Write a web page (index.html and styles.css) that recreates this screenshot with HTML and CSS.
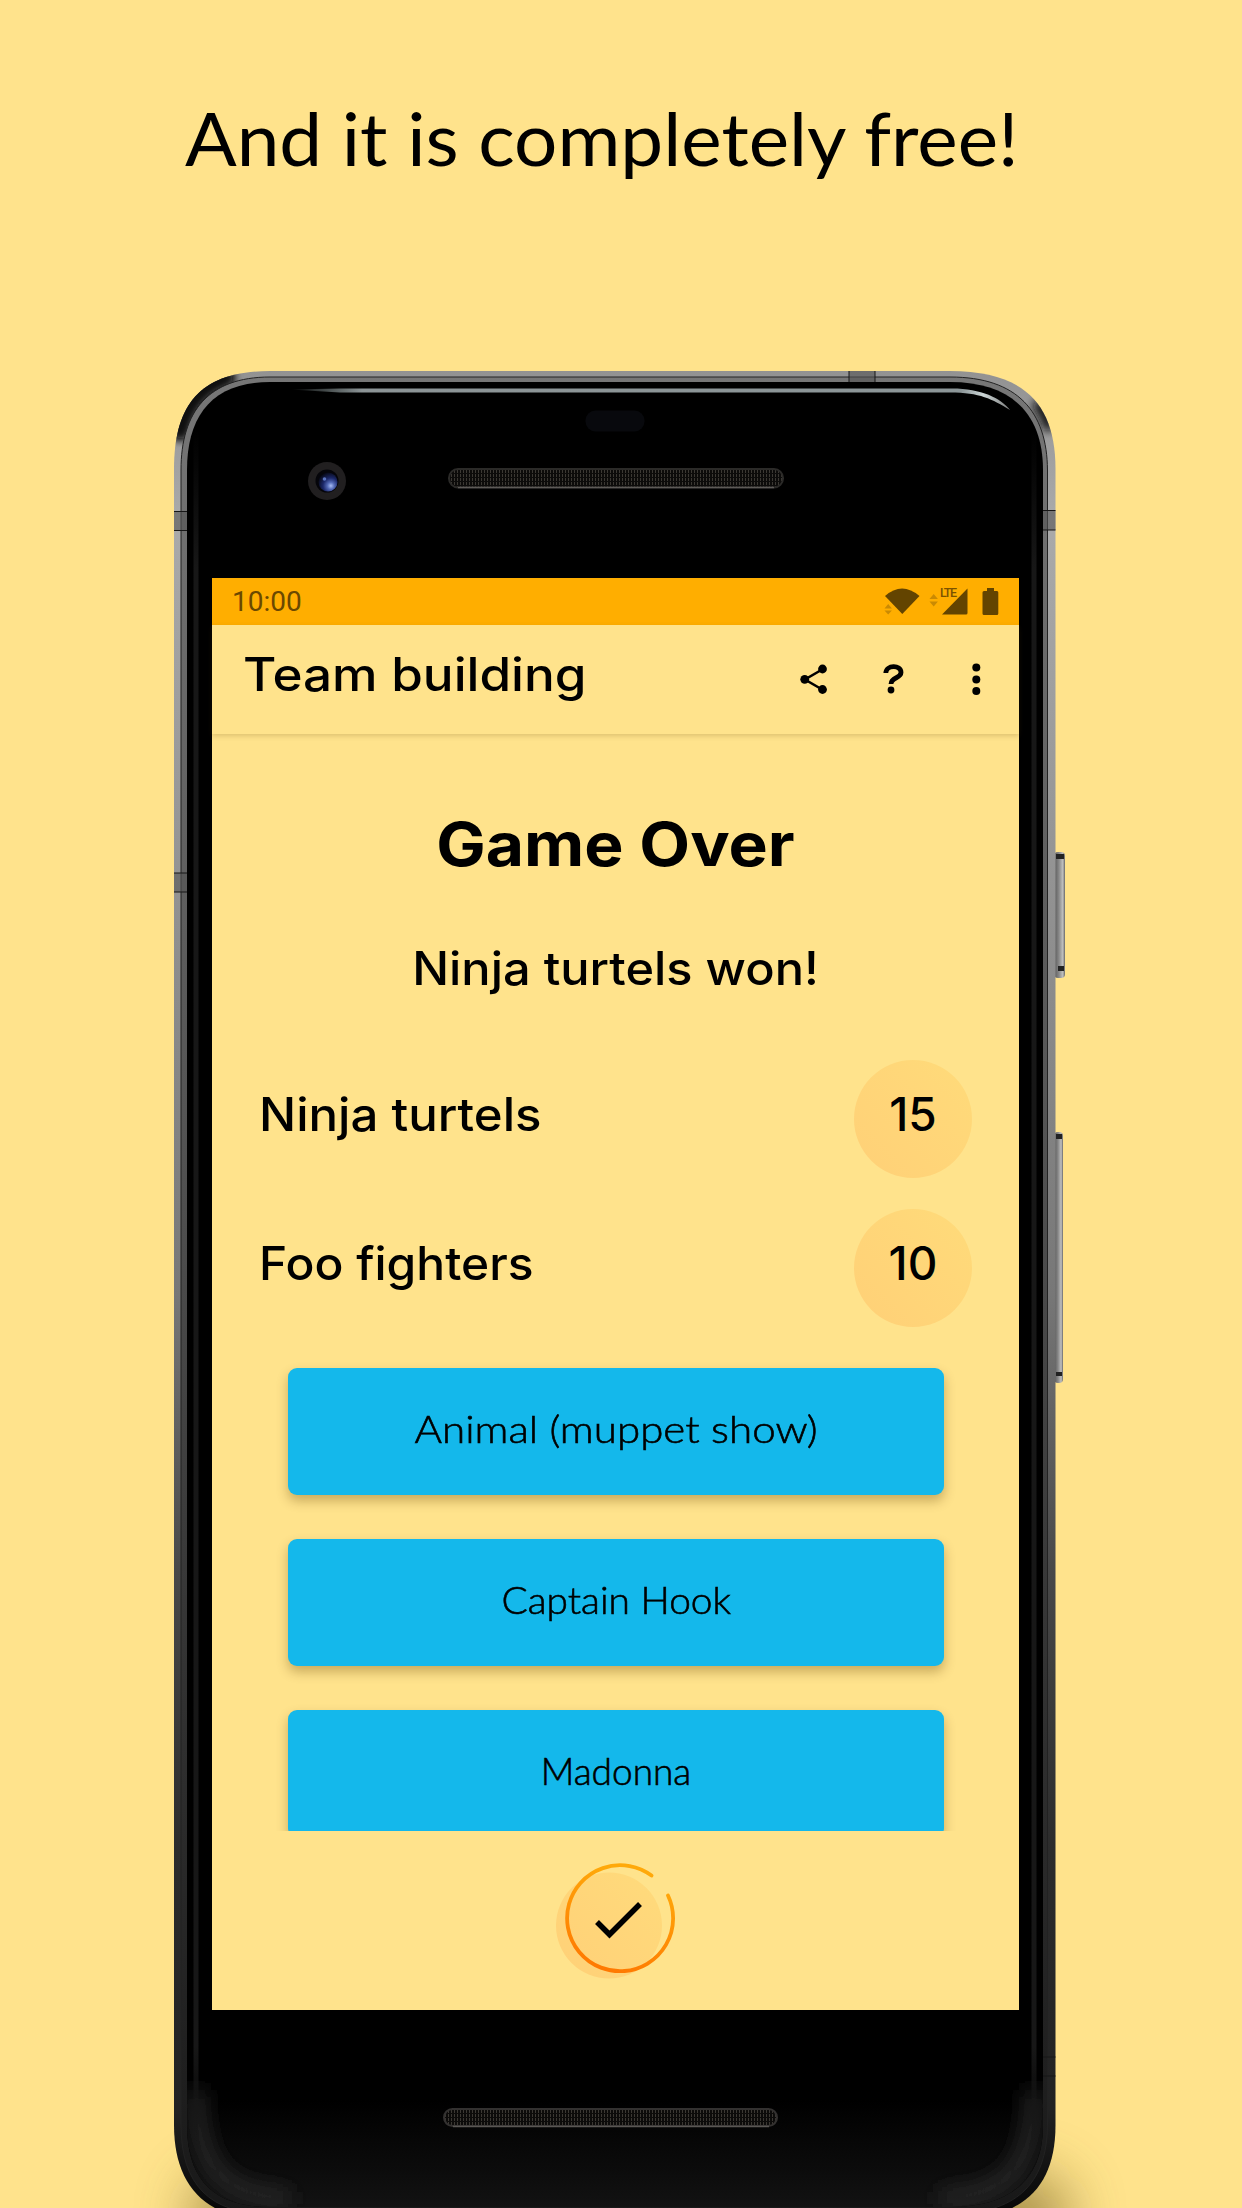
FILE: index.html
```html
<!DOCTYPE html>
<html lang="en">
<head>
<meta charset="utf-8">
<title>Team building</title>
<link rel="stylesheet" href="styles.css">
</head>
<body>
<h1 class="headline">And it is completely free!</h1>
<main class="device">
  <svg class="body" viewBox="0 0 1242 1858" width="1242" height="1858" aria-hidden="true">
    <defs>
      <linearGradient id="edge" x1="0" y1="20" x2="0" y2="1870" gradientUnits="userSpaceOnUse">
        <stop offset="0" stop-color="#929292"/><stop offset=".08" stop-color="#aaa"/><stop offset=".25" stop-color="#969696"/><stop offset=".5" stop-color="#777"/><stop offset=".65" stop-color="#484848"/><stop offset=".8" stop-color="#2c2c2c"/><stop offset=".94" stop-color="#222"/><stop offset="1" stop-color="#050505"/>
      </linearGradient>
      <linearGradient id="rim" x1="0" y1="20" x2="0" y2="1870" gradientUnits="userSpaceOnUse">
        <stop offset="0" stop-color="#777"/><stop offset=".4" stop-color="#555"/><stop offset=".7" stop-color="#333"/><stop offset="1" stop-color="#181818"/>
      </linearGradient>
      <linearGradient id="shine" x1="290" y1="0" x2="1012" y2="0" gradientUnits="userSpaceOnUse">
        <stop offset="0" stop-color="#899" stop-opacity="0"/><stop offset=".1" stop-color="#8c9496"/><stop offset=".93" stop-color="#8c9698"/><stop offset=".96" stop-color="#ccd6d6"/><stop offset="1" stop-color="#777"/>
      </linearGradient>
      <linearGradient id="key" x1="0" y1="0" x2="1" y2="0">
        <stop offset="0" stop-color="#555"/><stop offset=".45" stop-color="#888"/><stop offset=".8" stop-color="#c0c0c0"/><stop offset="1" stop-color="#666"/>
      </linearGradient>
      <linearGradient id="chin" x1="0" y1="0" x2="0" y2="1">
        <stop offset="0" stop-color="#000"/><stop offset="1" stop-color="#121212"/>
      </linearGradient>
      <linearGradient id="side" x1="0" y1="80" x2="0" y2="1800" gradientUnits="userSpaceOnUse">
        <stop offset="0" stop-color="#171717" stop-opacity="0"/><stop offset=".08" stop-color="#171717"/><stop offset=".94" stop-color="#171717"/><stop offset="1" stop-color="#171717" stop-opacity="0"/>
      </linearGradient>
      <radialGradient id="lens" cx=".65" cy=".7" r=".75">
        <stop offset="0" stop-color="#a9bdf5"/><stop offset=".25" stop-color="#5268b5"/><stop offset=".55" stop-color="#1b2768"/><stop offset="1" stop-color="#05060f"/>
      </radialGradient>
      <pattern id="mesh" width="3" height="4" patternUnits="userSpaceOnUse">
        <rect width="3" height="4" fill="#0c0b0a"/><path d="M1.500 0v3" stroke="#3b3833"/>
      </pattern>
      <filter id="soft" x="-50%" y="-80%" width="200%" height="260%"><feGaussianBlur stdDeviation="28"/></filter>
      <filter id="corner" filterUnits="userSpaceOnUse" x="100" y="1600" width="1040" height="340"><feGaussianBlur stdDeviation="10"/></filter>
      <filter id="fade" filterUnits="userSpaceOnUse" x="100" y="-20" width="1040" height="240"><feGaussianBlur stdDeviation="5"/></filter>
      <clipPath id="face"><path d="M187 120C187 66 212 32 270 32H950C1014 32 1043 66 1043 120V1775C1043 1830 1010 1857 950 1857H270C214 1857 187 1830 187 1775Z"/></clipPath>
      <clipPath id="shell"><path d="M174 119C174 55 200 21 270 21H950C1025 21 1055.500 55 1055.500 119V1775C1055.500 1838 1022 1870 950 1870H270C205 1870 174 1835 174 1775Z"/></clipPath>
    </defs>
    <rect x="190" y="1825" width="880" height="80" rx="40" fill="#6b571e" opacity=".6" filter="url(#soft)"/>
    <rect x="1054" y="502" width="11" height="126" rx="4" fill="url(#key)"/>
    <path d="M1056 504h8v5h-8zM1058 616h6v5h-6z" fill="#222"/>
    <rect x="1054" y="782" width="9" height="251" rx="4" fill="url(#key)"/>
    <path d="M1056 784h6v5h-6zM1056 1022h6v4h-6z" fill="#222"/>
    <g clip-path="url(#shell)">
      <rect x="174" y="21" width="882" height="1850" fill="url(#edge)"/>
      <path d="M178 88C184 56 200 34 232 25" fill="none" stroke="#080808" stroke-width="16" filter="url(#fade)"/>
      <path d="M178 88C184 56 200 34 232 25" fill="none" stroke="#080808" stroke-width="14" filter="url(#fade)"/>
      <path d="M1036 52C1043 60 1047 68 1050 80" fill="none" stroke="#111" stroke-width="12" filter="url(#fade)"/>
    </g>
    <path d="M181 120C181 62 208 27 270 27H950C1018 27 1047 62 1047.500 120V1775C1047 1835 1015 1864 950 1864H270C210 1864 181 1835 181 1775Z" fill="url(#rim)" stroke="#222" stroke-width="1"/>
    <path d="M187 120C187 66 212 32 270 32H950C1014 32 1043 66 1043 120V1775C1043 1830 1010 1857 950 1857H270C214 1857 187 1830 187 1775Z" fill="#000"/>
    <g clip-path="url(#face)">
      <rect x="187" y="1750" width="856" height="107" fill="url(#chin)"/>
      <path d="M196 1740C196 1815 220 1848 290 1848M1034 1740C1034 1815 1010 1848 940 1848" fill="none" stroke="#2b2b2b" stroke-width="16" filter="url(#corner)"/>
      <path d="M193.500 80h5V1800h-5zM1031.500 80h5V1800h-5z" fill="url(#side)"/>
    </g>
    <path d="M290 39.500 340 38.500H950C980 38 1001 48 1010 60C992 49 980 42.500 950 42.500H340Z" fill="url(#shine)"/>
    <path d="M849 21h26v11h-26zM174 161.500h13v19h-13zM1043 160.500h12.500v19.500h-12.500zM174 523h13v19h-13z" fill="#555" opacity=".6"/>
    <path d="M849 21v11M875 21v11M174 161.500h13M174 180.500h13M1043 160.500h12.500M1043 180h12.500M174 523h13M174 542h13M1043 1707h12.500M1043 1726h12.500" stroke="#161616"/>
    <rect x="585.500" y="60.500" width="59" height="21" rx="10" fill="#08090d"/>
    <circle cx="327" cy="131" r="19" fill="#211f20"/><circle cx="327" cy="131" r="11.500" fill="#05050a"/><circle cx="328" cy="132" r="9.500" fill="url(#lens)"/><circle cx="324.500" cy="129" r="1.800" fill="#5b74bf"/>
    <rect x="449" y="119" width="334" height="18.500" rx="9" fill="url(#mesh)" stroke="#2b2a28" stroke-width="2"/>
    <path d="M458 137.500H774" stroke="#5d5a57" stroke-width="1.500"/>
    <rect x="444" y="1759" width="333" height="17" rx="8.500" fill="url(#mesh)" stroke="#333130" stroke-width="2"/>
    <path d="M453 1776.500H769" stroke="#5a5754" stroke-width="1.500"/>
  </svg>
  <div class="screen">
    <div class="status">
      <span>10:00</span>
      <svg width="116" height="30" viewBox="0 0 116 30" aria-hidden="true">
        <path d="M1 9Q18-6 35.500 9L18.300 27Z" fill="#634400"/>
        <path d="M.5 21.500l3.700-4.500 3.700 4.500zM.5 23.500h7.400L4.200 27.500zM45.500 12l4.200-5 4.200 5zM45.500 14.500h8.400l-4.200 5z" fill="#ca8a03"/>
        <path d="M58 27.500 83.500 1.500V26q0 1.500-1.500 1.500Z" fill="#634400"/>
        <path d="M100 4h3V1h7v3h3q1.300 0 1.300 1.500V26.500q0 1.500-1.500 1.500H100q-1.500 0-1.500-1.500V5.500Q98.500 4 100 4Z" fill="#634400"/>
        <text x="56" y="10" class="lte" textLength="17">LTE</text>
      </svg>
    </div>
    <header class="appbar">
      <h2>Team building</h2>
      <svg width="182" height="32" viewBox="0 0 182 32" aria-hidden="true">
        <path d="M23 6 5 16.500 23 27" fill="none" stroke="#000" stroke-width="2.600"/>
        <circle cx="22.500" cy="6" r="4.400"/><circle cx="4.700" cy="16.300" r="4.400"/><circle cx="22.500" cy="26.500" r="4.400"/>
        <path d="M85.800 10C86 1.800 101 1.200 101 9.500C101 15.500 91 14 91 21" fill="none" stroke="#000" stroke-width="4.800"/>
        <circle cx="91" cy="27" r="3.400"/>
        <circle cx="176.300" cy="4.600" r="4"/><circle cx="176.300" cy="16.400" r="4"/><circle cx="176.300" cy="28" r="4"/>
      </svg>
    </header>
    <section class="result">
      <h3>Game Over</h3>
      <p class="winner">Ninja turtels won!</p>
      <div class="team"><span class="name">Ninja turtels</span><b class="score">15</b></div>
      <div class="team"><span class="name short">Foo fighters</span><b class="score">10</b></div>
      <div class="cards">
        <div class="card"><span class="wide">Animal (muppet show)</span></div>
        <div class="card"><span class="medium">Captain Hook</span></div>
        <div class="card"><span>Madonna</span></div>
      </div>
    </section>
    <footer class="done">
      <svg width="122" height="118" viewBox="0 0 122 118" aria-hidden="true">
        <defs>
          <linearGradient id="disc" x1="0" y1="1" x2="1" y2="0"><stop offset="0" stop-color="#ffd077"/><stop offset="1" stop-color="#ffdb7c"/></linearGradient>
          <linearGradient id="ring" x1="0" y1="1" x2=".3" y2="0"><stop offset="0" stop-color="#ff7300"/><stop offset="1" stop-color="#ffa90a"/></linearGradient>
        </defs>
        <circle cx="53" cy="62.500" r="53" fill="url(#disc)"/>
        <path d="M95.500 12.500A53 53 0 1 0 112 32.500" fill="none" stroke="url(#ring)" stroke-width="3.800" stroke-linecap="round"/>
        <path d="M41 59 53.500 71.500 84 41" fill="none" stroke="#000" stroke-width="5.500"/>
      </svg>
    </footer>
  </div>
</main>
</body>
</html>
```
FILE: styles.css
```css
* { box-sizing: border-box; }
body {
  margin: 0;
  width: 1242px;
  height: 2208px;
  overflow: hidden;
  background: #ffe38c;
  color: #000;
  font-family: Inter, "Liberation Sans", sans-serif;
}
h1, h2, h3, p { margin: 0; font-weight: 500; }
.headline {
  height: 350px;
  margin-left: 184.500px;
  padding-top: 94px;
  font: 400 73px/88px Lato, sans-serif;
  white-space: nowrap;
  transform: scaleX(1.048);
  transform-origin: left;
}
.device { position: relative; height: 1858px; padding: 228px 223px 0 212px; }
.body { position: absolute; left: 0; top: 0; }
.screen {
  position: relative;
  display: flex;
  flex-direction: column;
  height: 1431.500px;
  background: #ffe38c;
}
.status {
  display: flex;
  justify-content: space-between;
  align-items: center;
  height: 47px;
  padding: 0 19px 0 20px;
  background: #ffae00;
  color: #6b4900;
  font: 400 28px/47px Roboto, sans-serif;
}
.lte { font: 500 12.500px Roboto, sans-serif; fill: #7a5200; }
.appbar {
  display: flex;
  justify-content: space-between;
  align-items: center;
  height: 109px;
  padding: 0 37px 2px 31px;
  box-shadow: 0 2px 5px rgba(90, 60, 0, .2);
}
.appbar h2 {
  padding-bottom: 9px;
  font-size: 46px;
  transform: scaleX(1.113);
  transform-origin: left;
}
.result { height: 1097px; overflow: hidden; }
h3 {
  padding-top: 75px;
  font-size: 60px;
  font-weight: 700;
  line-height: 70px;
  text-align: center;
  transform: scaleX(1.1);
}
.winner {
  padding-top: 61px;
  font-size: 46px;
  line-height: 56px;
  text-align: center;
  transform: scaleX(1.06);
}
.team {
  display: flex;
  justify-content: space-between;
  align-items: center;
  height: 118px;
  margin: 63.500px 47px 0;
  font-size: 46px;
  font-weight: 500;
}
.team + .team { margin-top: 31px; }
.name {
  padding-bottom: 9px;
  transform: scaleX(1.068);
  transform-origin: left;
}
.name.short { transform: scaleX(1.042); }
.score {
  width: 118px;
  height: 118px;
  border-radius: 50%;
  background: linear-gradient(45deg, #ffd077, #ffdb7a);
  font-weight: 500;
  line-height: 109px;
  text-align: center;
}
.cards { display: flex; flex-direction: column; gap: 44px; padding: 41.500px 75px 0 76px; }
.card {
  flex: none;
  height: 127px;
  border-radius: 9px;
  background: #14b8eb;
  box-shadow: 0 6px 12px rgba(90, 60, 0, .33);
  font: 300 37px/121px Lato, sans-serif;
  text-align: center;
  -webkit-text-stroke: .6px #000;
}
.card span { display: inline-block; }
.card .wide { transform: scaleX(1.138); }
.card .medium { transform: scaleX(1.05); }
.done { display: flex; justify-content: center; padding: 31.500px 0 0 2px; }
```
